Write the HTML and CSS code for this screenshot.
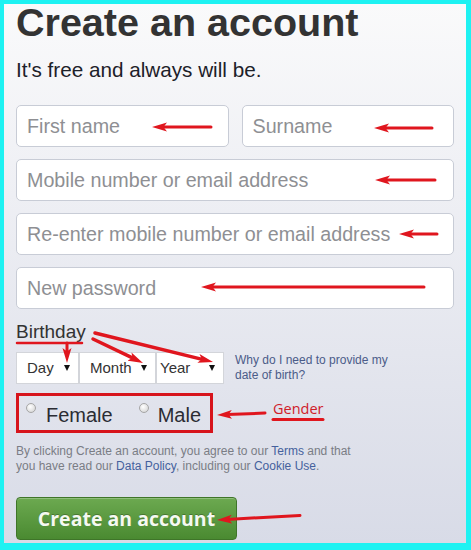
FILE: index.html
```html
<!DOCTYPE html>
<html lang="en">
<head>
<meta charset="utf-8">
<title>Create an account</title>
<link rel="stylesheet" href="styles.css">
</head>
<body>
<div class="frame">
  <h1 class="title">Create an account</h1>
  <p class="subtitle">It's free and always will be.</p>

  <div class="fields">
    <div class="row two">
      <div class="field"><span class="ph">First name</span></div>
      <div class="field"><span class="ph">Surname</span></div>
    </div>
    <div class="field"><span class="ph">Mobile number or email address</span></div>
    <div class="field"><span class="ph">Re-enter mobile number or email address</span></div>
    <div class="field"><span class="ph">New password</span></div>
  </div>

  <div class="birthday-label">Birthday</div>
  <div class="birthday">
    <div class="selects">
      <div class="sel sel-day"><span>Day</span><i class="caret"></i></div>
      <div class="sel sel-month"><span>Month</span><i class="caret"></i></div>
      <div class="sel sel-year"><span>Year</span><i class="caret"></i></div>
    </div>
    <a class="why">Why do I need to provide my<br>date of birth?</a>
  </div>

  <div class="gender">
    <span class="radio"></span><span class="gtext">Female</span>
    <span class="radio radio-male"></span><span class="gtext">Male</span>
  </div>

  <p class="terms"><span>By clicking Create an account, you agree to our </span><a>Terms</a><span> and that</span><br><span>you have read our </span><a>Data Policy</a><span>, including our </span><a>Cookie Use</a><span>.</span></p>

  <button class="submit">Create an account</button>

  <div class="notes">
    <svg class="arrows" width="471" height="550" viewBox="0 0 471 550">
      <defs>
        <marker id="ah" markerUnits="userSpaceOnUse" markerWidth="16" markerHeight="10" viewBox="0 0 16 10" refX="5" refY="5" orient="auto">
          <path d="M15 5 L0 0.5 L3.5 5 L0 9.5 Z" fill="#e0161e"/>
        </marker>
      </defs>
      <g stroke="#e0161e" stroke-width="3" stroke-linecap="round" fill="none">
        <path d="M211 127 L162 127" marker-end="url(#ah)"/>
        <path d="M432 128 L384 128" marker-end="url(#ah)"/>
        <path d="M435 180 L385 180" marker-end="url(#ah)"/>
        <path d="M437 234 L409 234" marker-end="url(#ah)"/>
        <path d="M424 287 L211 287" marker-end="url(#ah)"/>
        <path d="M17 343 L82 343" stroke-width="2.5"/>
        <path d="M67 343 L67 353" marker-end="url(#ah)"/>
        <path d="M93 339 L134 358.7" stroke-width="3.5" marker-end="url(#ah)"/>
        <path d="M95 333 L203.3 359.6" stroke-width="3.5" marker-end="url(#ah)"/>
        <path d="M265 413 L227 414.6" marker-end="url(#ah)"/>
        <path d="M273 419.5 L323 419.5"/>
        <path d="M300 515.5 L227 519.4" marker-end="url(#ah)"/>
      </g>
    </svg>
    <span class="gender-note">Gender</span>
  </div>
</div>
</body>
</html>
```
FILE: styles.css
```css
html, body {
  margin: 0;
  padding: 0;
}

body {
  font-family: "Liberation Sans", Arial, sans-serif;
}

.frame {
  position: relative;
  box-sizing: border-box;
  width: 471px;
  height: 550px;
  border-style: solid;
  border-color: #1ef2f2;
  border-width: 4px 5px 7px 4px;
  padding: 0 12px;
  background: linear-gradient(#fafafb, #d8dbe7);
  overflow: hidden;
}

.title {
  margin: 0;
  font-size: 39.5px;
  line-height: 37px;
  font-weight: 700;
  color: #333;
}

.subtitle {
  margin: 17px 0 0;
  font-size: 20.7px;
  line-height: 24px;
  color: #1d2129;
}

.fields {
  margin-top: 23px;
  display: flex;
  flex-direction: column;
  gap: 12px;
}

.row.two {
  display: grid;
  grid-template-columns: 1fr 1fr;
  gap: 13px;
}

.field {
  box-sizing: border-box;
  height: 42px;
  background: #fff;
  border: 1px solid #c8ccd6;
  border-radius: 5px;
  padding: 0 10px;
  line-height: 40px;
  font-size: 19.7px;
  white-space: nowrap;
}

.ph {
  color: #8e8f93;
}

.birthday-label {
  margin-top: 12px;
  font-size: 19px;
  line-height: 22px;
  color: #333;
}

.birthday {
  margin-top: 9px;
  display: flex;
  align-items: center;
  gap: 11px;
}

.selects {
  display: flex;
}

.sel {
  box-sizing: border-box;
  height: 32px;
  background: #fff;
  border: 1px solid #d3d5da;
  display: flex;
  align-items: center;
  justify-content: space-between;
  padding: 0 8px 0 10px;
  font-size: 15px;
  line-height: 30px;
  color: #333;
}

.sel-day { width: 63px; }
.sel-month { width: 77px; }
.sel-year { width: 68px; padding-left: 3px; }

.caret {
  width: 0;
  height: 0;
  border-left: 3.5px solid transparent;
  border-right: 3.5px solid transparent;
  border-top: 6px solid #111;
}

.why {
  font-size: 12px;
  line-height: 15px;
  color: #4b5c89;
}

.gender {
  margin-top: 9px;
  box-sizing: border-box;
  width: 197px;
  height: 40px;
  border: 3px solid #d7141c;
  display: flex;
  align-items: flex-start;
  padding: 7px 0 0 7px;
}

.radio {
  box-sizing: border-box;
  width: 10px;
  height: 10px;
  border-radius: 50%;
  border: 1px solid #a6a6a6;
  background: radial-gradient(circle at 40% 35%, #ffffff, #cfcfcf);
  margin-right: 10px;
  flex: none;
}

.radio-male {
  margin-left: 26px;
  margin-right: 9px;
}

.gtext {
  font-size: 20px;
  line-height: 24px;
  color: #2b2c33;
}

.terms {
  margin: 11px 0 0;
  font-size: 12px;
  line-height: 15px;
  color: #7a7d85;
  white-space: nowrap;
}

.terms a {
  color: #45619d;
}

.submit {
  display: block;
  margin-top: 23px;
  box-sizing: border-box;
  width: 221px;
  height: 43px;
  padding: 0;
  border: 1px solid #3f7529;
  border-radius: 4px;
  background: linear-gradient(#6ca950, #4a8a31);
  box-shadow: inset 0 1px 0 rgba(255, 255, 255, 0.25);
  font-family: "Open Sans", "Liberation Sans", sans-serif;
  font-weight: 700;
  font-size: 19.5px;
  line-height: 41px;
  color: #f5f9f1;
  text-shadow: 0 -1px 0 rgba(0, 0, 0, 0.25);
}

.notes {
  position: absolute;
  left: -4px;
  top: -4px;
  width: 471px;
  height: 550px;
  pointer-events: none;
}

.arrows {
  position: absolute;
  left: 0;
  top: 0;
}

.gender-note {
  position: absolute;
  left: 273px;
  top: 402px;
  font-family: "Open Sans", "Liberation Sans", sans-serif;
  font-size: 14.5px;
  line-height: 1;
  color: #d0202a;
}
```
